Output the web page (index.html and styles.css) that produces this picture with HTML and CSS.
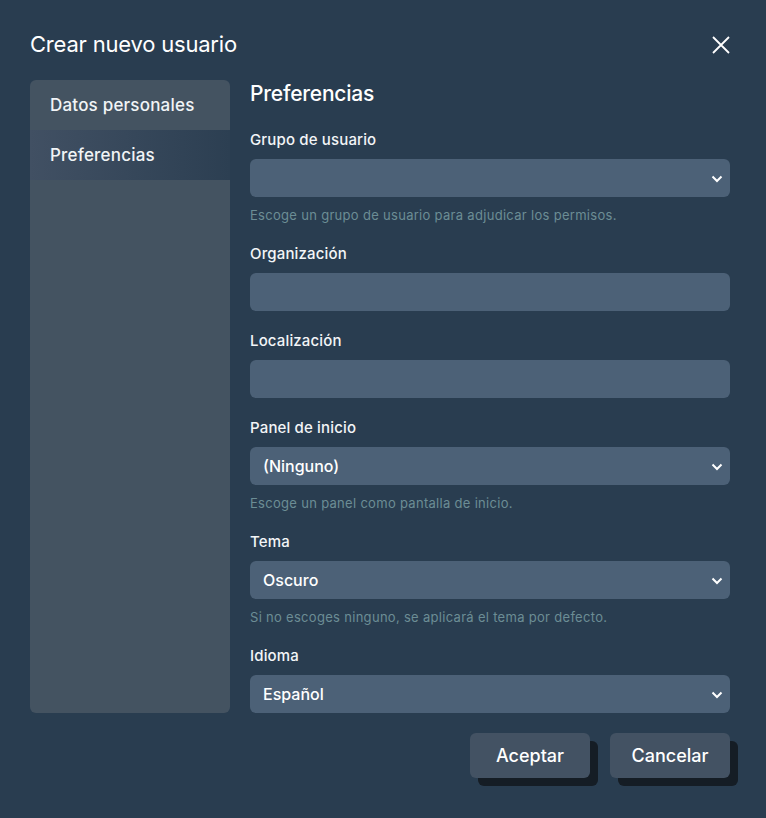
FILE: index.html
```html
<!DOCTYPE html>
<html lang="es">
<head>
<meta charset="utf-8">
<title>Crear nuevo usuario</title>
<link rel="stylesheet" href="styles.css">
</head>
<body>
<div class="dialog">
  <header class="dialog-header">
    <h1 class="dialog-title">Crear nuevo usuario</h1>
    <button class="close-btn" aria-label="Cerrar">
      <svg width="20" height="20" viewBox="0 0 20 20"><path d="M2 2 L18 18 M18 2 L2 18" stroke="#ffffff" stroke-width="1.8" fill="none"/></svg>
    </button>
  </header>
  <div class="dialog-body">
    <nav class="sidebar">
      <div class="nav-item">Datos personales</div>
      <div class="nav-item active">Preferencias</div>
    </nav>
    <main class="content">
      <h2 class="section-title">Preferencias</h2>
      <div class="field">
        <label class="label">Grupo de usuario</label>
        <div class="select"><span></span><svg class="chev" width="12" height="8" viewBox="0 0 12 8"><path d="M1.5 1.5 L6 6 L10.5 1.5" stroke="#fff" stroke-width="2" fill="none"/></svg></div>
        <div class="help">Escoge un grupo de usuario para adjudicar los permisos.</div>
      </div>
      <div class="field">
        <label class="label">Organización</label>
        <div class="select"></div>
      </div>
      <div class="field">
        <label class="label">Localización</label>
        <div class="select"></div>
      </div>
      <div class="field">
        <label class="label">Panel de inicio</label>
        <div class="select"><span>(Ninguno)</span><svg class="chev" width="12" height="8" viewBox="0 0 12 8"><path d="M1.5 1.5 L6 6 L10.5 1.5" stroke="#fff" stroke-width="2" fill="none"/></svg></div>
        <div class="help">Escoge un panel como pantalla de inicio.</div>
      </div>
      <div class="field">
        <label class="label">Tema</label>
        <div class="select"><span>Oscuro</span><svg class="chev" width="12" height="8" viewBox="0 0 12 8"><path d="M1.5 1.5 L6 6 L10.5 1.5" stroke="#fff" stroke-width="2" fill="none"/></svg></div>
        <div class="help">Si no escoges ninguno, se aplicará el tema por defecto.</div>
      </div>
      <div class="field">
        <label class="label">Idioma</label>
        <div class="select"><span>Español</span><svg class="chev" width="12" height="8" viewBox="0 0 12 8"><path d="M1.5 1.5 L6 6 L10.5 1.5" stroke="#fff" stroke-width="2" fill="none"/></svg></div>
      </div>
    </main>
  </div>
  <footer class="dialog-footer">
    <button class="btn">Aceptar</button>
    <button class="btn">Cancelar</button>
  </footer>
</div>
</body>
</html>
```
FILE: styles.css
```css
html, body {
  margin: 0;
  padding: 0;
  background: #293d50;
}
body {
  font-family: Inter, "Noto Sans", sans-serif;
  color: #eef2f5;
  width: 766px;
  height: 818px;
  overflow: hidden;
}
.dialog {
  padding: 0 36px 0 30px;
}
.dialog-header {
  display: flex;
  align-items: center;
  justify-content: space-between;
  height: 80px;
  padding-top: 8px;
  box-sizing: border-box;
}
.dialog-title {
  margin: 0;
  font-size: 22px;
  font-weight: 400;
  letter-spacing: -0.2px;
  color: #ffffff;
}
.close-btn {
  background: none;
  border: none;
  padding: 0;
  width: 20px;
  height: 20px;
  margin-right: -1px;
  margin-top: 2px;
  display: flex;
  cursor: pointer;
}
.dialog-body {
  display: flex;
  gap: 20px;
  width: 700px;
}
.sidebar {
  width: 200px;
  height: 633px;
  background: #445361;
  border-radius: 6px;
  flex-shrink: 0;
}
.nav-item {
  height: 50px;
  line-height: 50px;
  padding-left: 20px;
  font-size: 17px;
  font-weight: 500;
  color: #f1f4f6;
  letter-spacing: 0.2px;
}
.nav-item.active {
  background: linear-gradient(90deg, #415063 0%, #2c3f52 100%);
}
.content {
  flex: 1;
  display: flex;
  flex-direction: column;
  gap: 20px;
}
.section-title {
  margin: 0 0 2px;
  height: 28px;
  line-height: 28px;
  font-size: 21px;
  font-weight: 500;
  color: #ffffff;
  letter-spacing: -0.2px;
}
.field {
  display: flex;
  flex-direction: column;
}
.label {
  height: 20px;
  line-height: 20px;
  font-size: 15px;
  font-weight: 500;
  margin-bottom: 9px;
  color: #f3f5f7;
  letter-spacing: 0.15px;
}
.select {
  height: 38px;
  background: #4c6177;
  border-radius: 6px;
  display: flex;
  align-items: center;
  justify-content: space-between;
  padding: 0 7px 0 13px;
  font-size: 16px;
  font-weight: 500;
  color: #ffffff;
}
.chev {
  margin-top: 1px;
}
.help {
  margin-top: 8px;
  margin-bottom: -1px;
  height: 20px;
  line-height: 20px;
  font-size: 13px;
  letter-spacing: 0.3px;
  color: #6c8d95;
}
.dialog-footer {
  display: flex;
  justify-content: flex-end;
  gap: 20px;
  padding-top: 20px;
  width: 700px;
}
.btn {
  width: 120px;
  height: 45px;
  background: #435263;
  border: none;
  border-radius: 6px;
  box-shadow: 8px 8px 0 #151d25;
  color: #ffffff;
  font-family: Inter, "Noto Sans", sans-serif;
  font-size: 18px;
  font-weight: 500;
  cursor: pointer;
}
```
